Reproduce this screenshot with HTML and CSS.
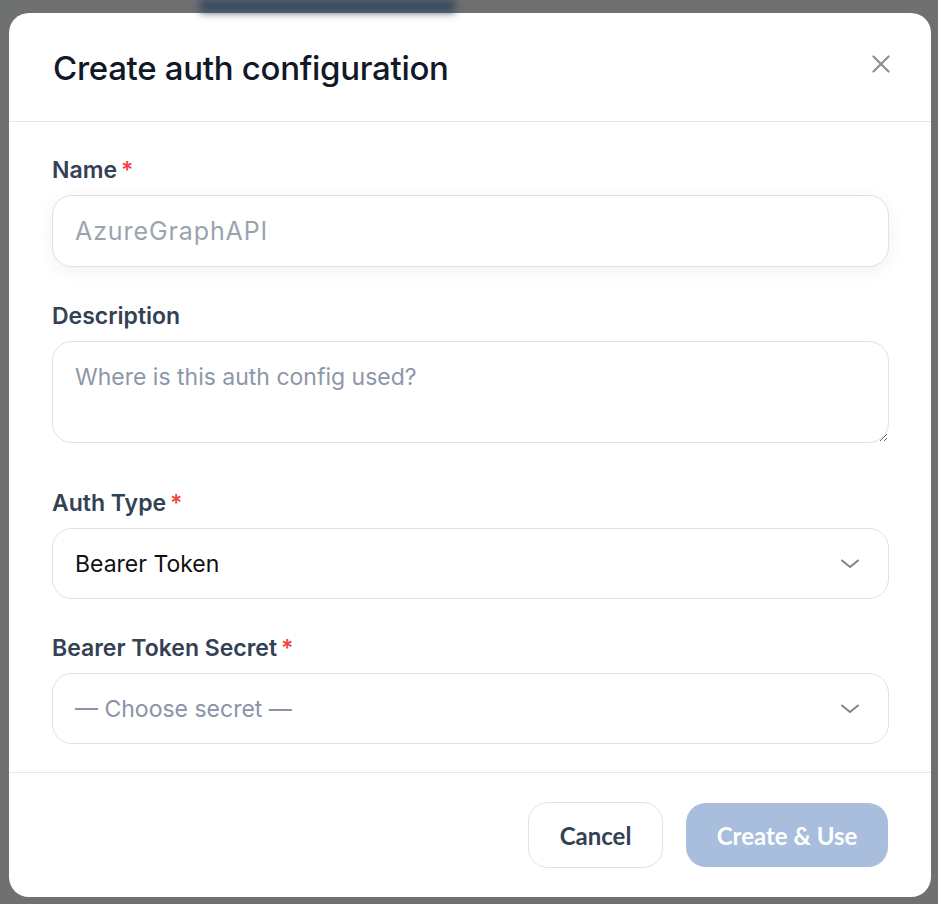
FILE: index.html
```html
<!DOCTYPE html>
<html>
<head>
	<meta charset="utf-8">
	<title>Create auth configuration</title>
	<link rel="stylesheet" href="styles.css">
</head>
<body>
<div class="backdrop-bar"></div>
<div class="modal">
	<div class="modal-head">
		<h1>Create auth configuration</h1>
		<button class="close" aria-label="Close">
			<svg width="26" height="26" viewBox="0 0 24 24" fill="none" stroke="#8390a0" stroke-width="2" stroke-linecap="round"><path d="M5 5L19 19M19 5L5 19"/></svg>
		</button>
	</div>

	<div class="modal-body">
		<div class="field">
			<label>Name<span class="req">*</span></label>
			<input class="input shadow name" type="text" placeholder="AzureGraphAPI">
		</div>
		<div class="field">
			<label>Description</label>
			<textarea class="input area" placeholder="Where is this auth config used?"></textarea>
		</div>
		<div class="field">
			<label>Auth Type<span class="req">*</span></label>
			<div class="input select">
				<span class="value">Bearer Token</span>
				<svg width="24" height="24" viewBox="0 0 24 24" fill="none" stroke="#7b8494" stroke-width="2" stroke-linecap="round" stroke-linejoin="round"><path d="M4 8.5l8 6.5 8-6.5"/></svg>
			</div>
		</div>
		<div class="field">
			<label>Bearer Token Secret<span class="req">*</span></label>
			<div class="input select">
				<span class="value muted">— Choose secret —</span>
				<svg width="24" height="24" viewBox="0 0 24 24" fill="none" stroke="#7b8494" stroke-width="2" stroke-linecap="round" stroke-linejoin="round"><path d="M4 8.5l8 6.5 8-6.5"/></svg>
			</div>
		</div>
	</div>

	<div class="modal-foot">
		<button class="btn btn-cancel">Cancel</button>
		<button class="btn btn-primary">Create &amp; Use</button>
	</div>
</div>
</body>
</html>
```

FILE: styles.css
```css
html, body{
	margin: 0;
	height: 100%;
}
body{
	background-color: #6f7070;
	font-family: "Inter", "Noto Sans", sans-serif;
	overflow: hidden;
}
.backdrop-bar{
	width: 255px;
	height: 12px;
	margin-left: 200px;
	background-color: #33475f;
	filter: blur(4px);
}
.modal{
	width: 922px;
	height: 884px;
	margin: 1px 0 0 9px;
	background-color: #fff;
	border-radius: 20px;
	display: flex;
	flex-direction: column;
	box-sizing: border-box;
}
.modal-head{
	height: 109px;
	flex-shrink: 0;
	box-sizing: border-box;
	padding: 0 36px 0 44px;
	border-bottom: 1px solid #e2e8ec;
	display: flex;
	align-items: center;
	justify-content: space-between;
}
.modal-head h1{
	margin: 1px 0 0 0;
	font-family: "Inter", sans-serif;
	font-size: 33px;
	font-weight: 500;
	color: #111827;
	letter-spacing: -0.3px;
}
.close{
	border: none;
	background: none;
	padding: 0;
	margin-bottom: 6px;
	margin-right: 1px;
	display: flex;
}
.modal-body{
	flex: 1;
	padding: 33px 42px 0 43px;
	border-bottom: 1px solid #e2e8ec;
}
.field{
	display: flex;
	flex-direction: column;
	margin-bottom: 34px;
}
.field:nth-child(2){
	margin-bottom: 45px;
}
.field:last-child{
	margin-bottom: 0;
}
.field label{
	font-size: 23px;
	font-weight: 600;
	color: #334155;
	line-height: 30px;
	margin-bottom: 10px;
	letter-spacing: 0;
}
.req{
	color: #ef4444;
	margin-left: 4px;
}
.input{
	box-sizing: border-box;
	width: 100%;
	height: 72px;
	border: 1px solid #dbe3e6;
	border-radius: 20px;
	background: #fff;
	padding: 0 22px;
	font-family: "Inter", "Noto Sans", sans-serif;
	font-size: 23px;
	color: #111;
	outline: none;
}
.input::placeholder{
	color: #9ca3af;
}
.name{
	font-size: 25px;
	letter-spacing: 0.9px;
}
.shadow{
	box-shadow: 0 4px 18px rgba(0,0,0,0.06);
}
.area{
	height: 102px;
	padding: 21px 22px;
	resize: vertical;
	display: block;
}
.area::placeholder{
	color: #8d97a9;
}
.select{
	height: 71px;
	display: flex;
	align-items: center;
	justify-content: space-between;
	padding: 0 26px 0 22px;
}
.value{
	color: #111;
}
.muted{
	color: #8a94a6;
}
.modal-foot{
	height: 124px;
	flex-shrink: 0;
	box-sizing: border-box;
	padding: 0 43px 0 0;
	display: flex;
	align-items: center;
	justify-content: flex-end;
	gap: 23px;
}
.btn{
	font-family: "Lato", "Noto Sans", sans-serif;
	font-size: 24px;
	font-weight: 700;
	border-radius: 20px;
	cursor: pointer;
}
.btn-cancel{
	width: 135px;
	height: 66px;
	background: #fff;
	border: 1px solid #dbe3e6;
	color: #334155;
}
.btn-primary{
	width: 202px;
	height: 64px;
	border: none;
	background-color: #a9bedd;
	color: #fff;
}
```
